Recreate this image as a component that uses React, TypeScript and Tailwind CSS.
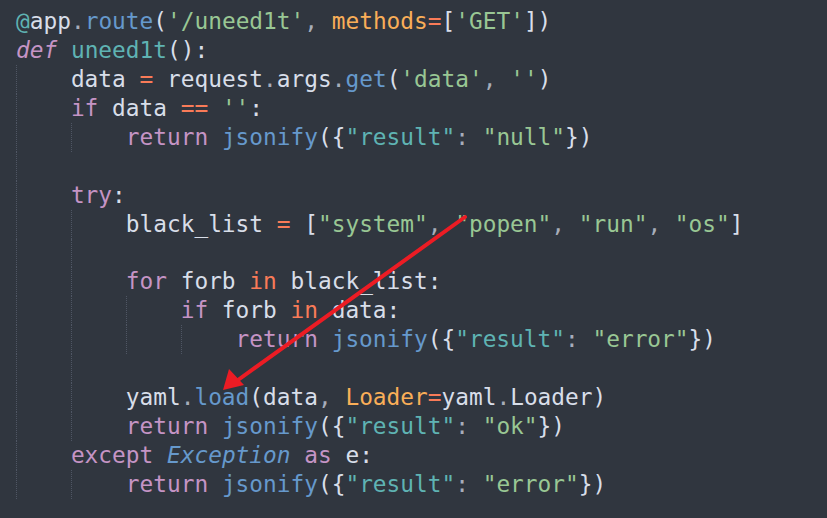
type Tok = [string, string, boolean?];
type Line = { guides: number; toks: Tok[] };

const W = "#d8dee9";
const G = "#a7adba";
const K = "#c594c5";
const S = "#99c794";
const T = "#5fb3b3";
const B = "#6699cc";
const O = "#f97b58";
const P = "#f9ae58";

const ret = (val: string): Tok[] => [
  ["return", K],
  [" ", W],
  ["jsonify", B],
  ["({", W],
  ['"result"', T],
  [": ", G],
  [`"${val}"`, S],
  ["})", W],
];

const lines: Line[] = [
  {
    guides: 0,
    toks: [
      ["@", T],
      ["app", W],
      [".", G],
      ["route", B],
      ["(", W],
      ["'/uneed1t'", S],
      [", ", G],
      ["methods", P],
      ["=", O],
      ["[", W],
      ["'GET'", S],
      ["])", W],
    ],
  },
  {
    guides: 0,
    toks: [
      ["def", K, true],
      [" ", W],
      ["uneed1t", T],
      ["():", W],
    ],
  },
  {
    guides: 1,
    toks: [
      ["data", W],
      [" = ", O],
      ["request", W],
      [".", G],
      ["args", W],
      [".", G],
      ["get", B],
      ["(", W],
      ["'data'", S],
      [", ", G],
      ["''", S],
      [")", W],
    ],
  },
  {
    guides: 1,
    toks: [
      ["if", K],
      [" data ", W],
      ["==", O],
      [" ", W],
      ["''", S],
      [":", W],
    ],
  },
  { guides: 2, toks: ret("null") },
  { guides: 1, toks: [] },
  { guides: 1, toks: [["try", K], [":", W]] },
  {
    guides: 2,
    toks: [
      ["black_list", W],
      [" = ", O],
      ["[", W],
      ['"system"', S],
      [", ", G],
      ['"popen"', S],
      [", ", G],
      ['"run"', S],
      [", ", G],
      ['"os"', S],
      ["]", W],
    ],
  },
  { guides: 2, toks: [] },
  {
    guides: 2,
    toks: [
      ["for", K],
      [" forb ", W],
      ["in", O],
      [" black_list:", W],
    ],
  },
  {
    guides: 3,
    toks: [
      ["if", K],
      [" forb ", W],
      ["in", O],
      [" data:", W],
    ],
  },
  { guides: 4, toks: ret("error") },
  { guides: 2, toks: [] },
  {
    guides: 2,
    toks: [
      ["yaml", W],
      [".", G],
      ["load", B],
      ["(", W],
      ["data", W],
      [", ", G],
      ["Loader", P],
      ["=", O],
      ["yaml", W],
      [".", G],
      ["Loader", W],
      [")", W],
    ],
  },
  { guides: 2, toks: ret("ok") },
  {
    guides: 1,
    toks: [
      ["except", K],
      [" ", W],
      ["Exception", B, true],
      [" ", W],
      ["as", K],
      [" e:", W],
    ],
  },
  { guides: 2, toks: ret("error") },
];

function CodeLine({ line }: { line: Line }) {
  return (
    <div className="flex h-[28.94px] items-stretch whitespace-pre">
      {Array.from({ length: line.guides }).map((_, i) => (
        <span
          key={i}
          className="inline-block w-[4ch] border-l border-dotted border-[#4f5664]"
        />
      ))}
      <span className="leading-[28.94px]">
        {line.toks.map(([text, color, italic], i) => (
          <span key={i} style={{ color }} className={italic ? "italic" : ""}>
            {text}
          </span>
        ))}
      </span>
    </div>
  );
}

export default function App() {
  return (
    <div className="relative h-[518px] w-[827px] overflow-hidden bg-[#30363f] pl-[16px] pt-[7px] font-['DejaVu_Sans_Mono',monospace] text-[22.8px] text-[#d8dee9]">
      <div className="flex flex-col">
        {lines.map((line, i) => (
          <CodeLine key={i} line={line} />
        ))}
      </div>
      {/* red annotation arrow */}
      <svg
        className="absolute left-0 top-0"
        width="827"
        height="518"
        viewBox="0 0 827 518"
      >
        <line
          x1="465"
          y1="217"
          x2="238"
          y2="380"
          stroke="#ec1c24"
          strokeWidth="4"
          strokeLinecap="round"
        />
        <polygon points="223,390 229,369 244,385" fill="#ec1c24" />
      </svg>
    </div>
  );
}
